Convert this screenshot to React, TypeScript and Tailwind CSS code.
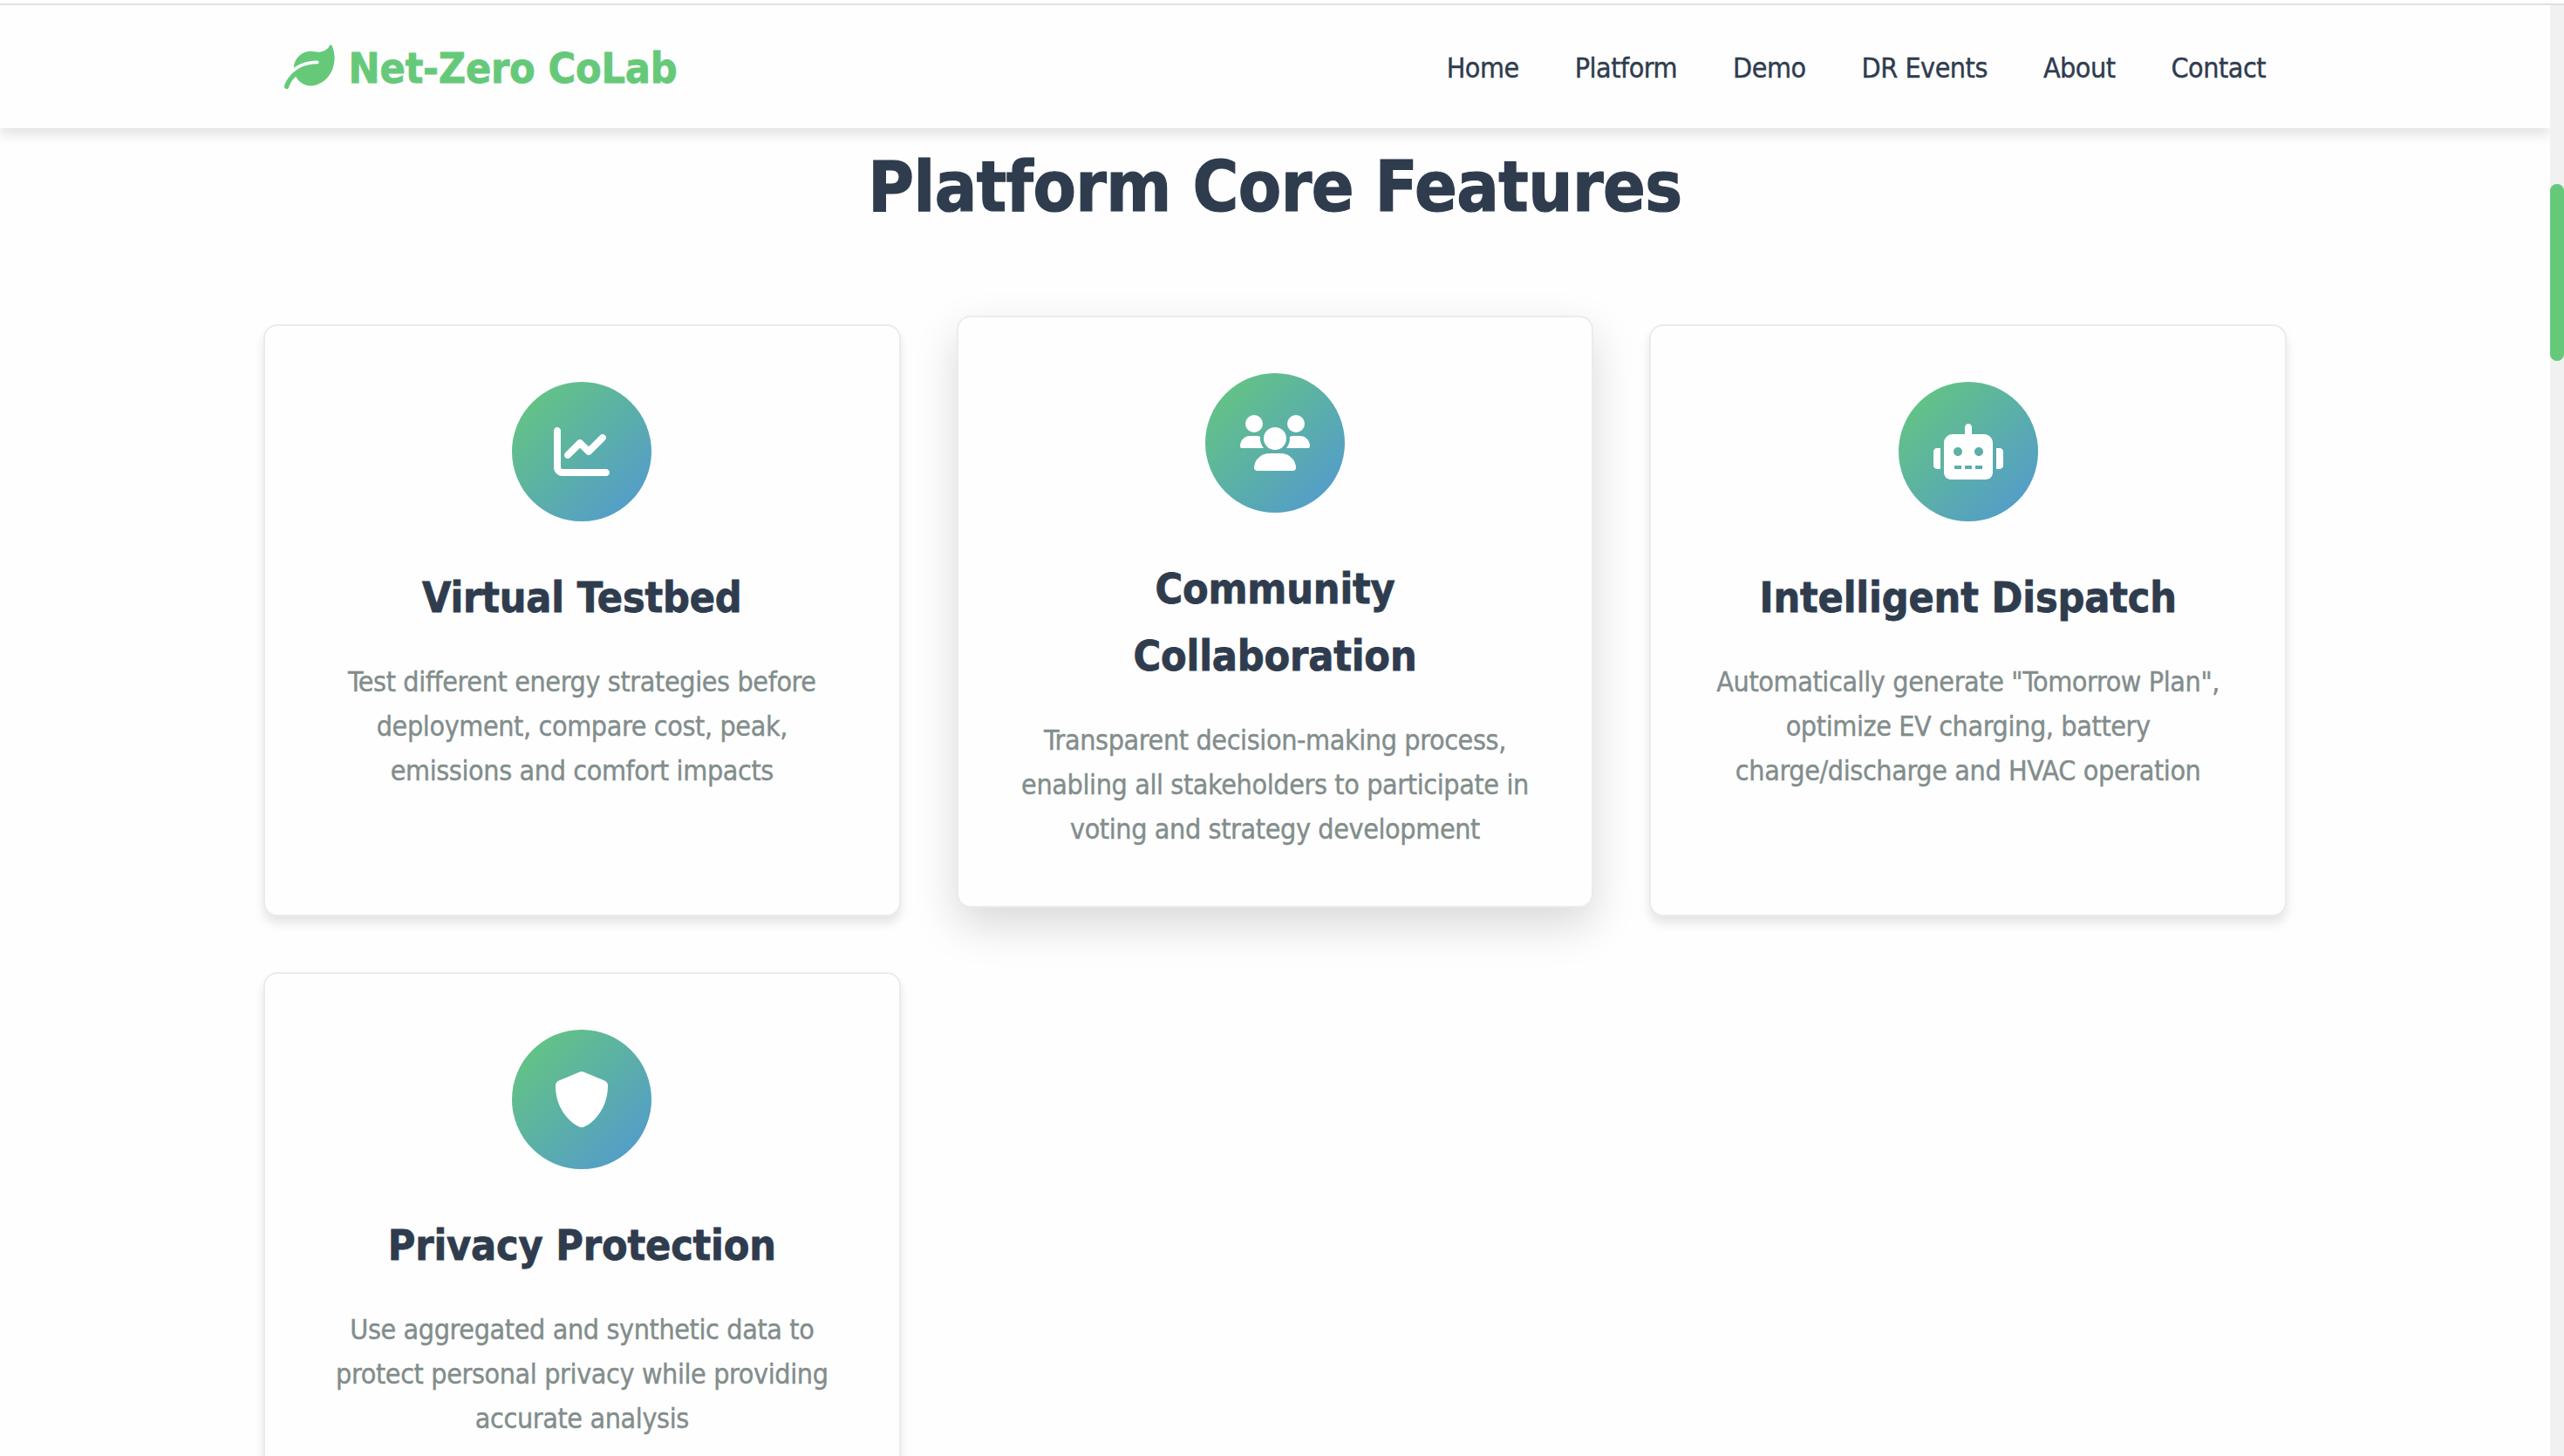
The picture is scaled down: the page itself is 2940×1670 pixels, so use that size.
import type { ReactNode } from "react";
import { FaChartLine } from "react-icons/fa6";
import clsx from "clsx";

const navItems = ["Home", "Platform", "Demo", "DR Events", "About", "Contact"];

type Feature = {
  icon: ReactNode;
  title: string;
  text: string;
  raised?: boolean;
};

function LeafIcon() {
  return (
    <svg viewBox="0 0 512 512" fill="currentColor" className="size-[57.6px]">
      <path d="M512 165.4c0 127.9-70.05 235.3-175.3 270.1c-20.04 7.938-41.83 12.46-64.69 12.46c-64.9 0-125.2-36.51-155.7-94.47c-54.13 49.93-68.71 107-68.96 108.1C44.72 472.6 34.87 480 24.02 480c-1.844 0-3.727-.2187-5.602-.6562c-12.89-3.098-20.84-16.08-17.75-28.96c9.598-39.5 90.47-226.4 335.3-226.4C344.8 224 352 216.8 352 208S344.8 192 336 192C228.6 192 151 226.6 96.29 267.6c.1934-10.82 1.242-21.84 3.535-33.05c13.47-65.81 66.04-119 131.4-134.2c28.33-6.562 55.68-6.013 80.93-.0054c56 13.32 118.2-7.412 149.3-61.24c5.664-9.828 20.02-9.516 24.66 .8282C502.7 76.76 512 121.9 512 165.4z" />
    </svg>
  );
}

function UsersIcon() {
  return (
    <svg viewBox="0 0 640 512" fill="currentColor" className="h-16 w-20">
      <circle cx="128" cy="80" r="80" />
      <circle cx="512" cy="80" r="80" />
      <circle cx="320" cy="216" r="104" />
      <path d="M369.9 352H270.1C191.6 352 128 411.7 128 485.3C128 500.1 140.7 512 156.4 512h327.2C499.3 512 512 500.1 512 485.3C512 411.7 448.4 352 369.9 352z" />
      <path d="M183.9 216c0-5.449 .9824-10.63 1.609-15.91C174.6 194.1 162.6 192 149.9 192H88.08C39.44 192 0 233.8 0 285.3C0 295.6 7.887 304 17.62 304h199.5C196.7 280.2 183.9 249.7 183.9 216z" />
      <path d="M551.9 192h-61.84c-12.8 0-24.88 3.037-35.86 8.24C454.8 205.5 455.8 210.6 455.8 216c0 33.71-12.78 64.21-33.16 88h199.7C632.1 304 640 295.6 640 285.3C640 233.8 600.6 192 551.9 192z" />
    </svg>
  );
}

function RobotIcon() {
  return (
    <svg viewBox="0 0 640 512" fill="currentColor" fillRule="evenodd" className="h-16 w-20">
      <path d="M9.375 233.4C3.375 239.4 0 247.5 0 256v128c0 8.5 3.375 16.62 9.375 22.62S23.5 416 32 416h32V224H32C23.5 224 15.38 227.4 9.375 233.4zM464 96H352V32c0-17.62-14.38-32-32-32S288 14.38 288 32v64H176C131.8 96 96 131.8 96 176V448c0 35.38 28.62 64 64 64h320c35.38 0 64-28.62 64-64V176C544 131.8 508.3 96 464 96zM256 416H192v-32h64V416zM224 296C201.9 296 184 278.1 184 256S201.9 216 224 216S264 233.9 264 256S246.1 296 224 296zM352 416H288v-32h64V416zM448 416h-64v-32h64V416zM416 296c-22.12 0-40-17.88-40-40S393.9 216 416 216S456 233.9 456 256S438.1 296 416 296zM630.6 233.4C624.6 227.4 616.5 224 608 224h-32v192h32c8.5 0 16.62-3.375 22.62-9.375S640 392.5 640 384V256C640 247.5 636.6 239.4 630.6 233.4z" />
    </svg>
  );
}

function ShieldIcon() {
  return (
    <svg viewBox="0 0 512 512" fill="currentColor" className="size-16">
      <path d="M496 128C496 381.3 309.1 512 256 512C204.9 512 16 385.3 16 128c0-19.41 11.7-36.89 29.61-44.28l192-80.01C242.5 1.67 250.6 0 256 0s13.58 1.67 18.49 3.7l192 80.01C484.3 91.1 496 108.6 496 128z" />
    </svg>
  );
}

const features: Feature[] = [
  {
    icon: <FaChartLine className="size-16" />,
    title: "Virtual Testbed",
    text: "Test different energy strategies before\ndeployment, compare cost, peak,\nemissions and comfort impacts",
  },
  {
    icon: <UsersIcon />,
    title: "Community\nCollaboration",
    text: "Transparent decision-making process,\nenabling all stakeholders to participate in\nvoting and strategy development",
    raised: true,
  },
  {
    icon: <RobotIcon />,
    title: "Intelligent Dispatch",
    text: "Automatically generate \"Tomorrow Plan\",\noptimize EV charging, battery\ncharge/discharge and HVAC operation",
  },
  {
    icon: <ShieldIcon />,
    title: "Privacy Protection",
    text: "Use aggregated and synthetic data to\nprotect personal privacy while providing\naccurate analysis",
  },
];

function Header() {
  return (
    <header className="relative z-10 h-[141px] shrink-0 bg-[#fefefe] shadow-[0_8px_12px_rgba(0,0,0,0.1)]">
      <div className="mx-auto flex h-full w-[2400px] items-center justify-between px-16">
        <div className="flex items-center gap-4 text-[#66c97a]">
          <LeafIcon />
          <span className="pt-[3px] text-[48px] leading-[76.8px] font-bold tracking-[-0.2px] whitespace-nowrap [-webkit-text-stroke:0.8px]">
            Net-Zero CoLab
          </span>
        </div>
        <nav className="flex gap-16 pt-1">
          {navItems.map((item) => (
            <a
              key={item}
              href="#"
              className="text-[32px] leading-[51.2px] tracking-[-0.5px] whitespace-nowrap [-webkit-text-stroke:0.4px]"
            >
              {item}
            </a>
          ))}
        </nav>
      </div>
    </header>
  );
}

function FeatureCard({ icon, title, text, raised }: Feature) {
  return (
    <article
      className={clsx(
        "rounded-[16px] border-2 border-[#ebebef] bg-[#fefefe] pt-16 pb-[62px] text-center",
        raised
          ? "-translate-y-[10px] shadow-[0_20px_50px_rgba(0,0,0,0.15)]"
          : "shadow-[0_8px_12px_rgba(0,0,0,0.1)]"
      )}
    >
      <div className="mx-auto mb-[49px] flex size-40 items-center justify-center rounded-full bg-[linear-gradient(135deg,#66c97a,#5197d4)] text-white">
        {icon}
      </div>
      <h3 className="mb-[33px] text-[48px] leading-[76.8px] font-bold tracking-[-0.15px] whitespace-pre [-webkit-text-stroke:0.8px]">
        {title}
      </h3>
      <p className="text-[32px] leading-[51.2px] tracking-[-0.39px] whitespace-pre text-[#828d8c] [-webkit-text-stroke:0.4px]">
        {text}
      </p>
    </article>
  );
}

export default function App() {
  return (
    <div className="flex h-[1670px] w-[2940px] flex-col overflow-hidden bg-[#fefefe] pt-1 font-['DejaVu_Sans_Condensed','DejaVu_Sans',sans-serif] text-[#2f3c4e]">
      <div className="h-0.5 shrink-0 bg-[#e0e0e0]" />
      <div className="flex min-h-0 flex-1">
        <div className="flex w-[2924px] flex-col overflow-hidden">
          <Header />
          <main className="mx-auto w-[2400px] px-10 pt-1">
            <h2 className="mb-[93px] text-center text-[80px] leading-[128px] font-bold tracking-[-0.5px] whitespace-nowrap [-webkit-text-stroke:1.2px]">
              Platform Core Features
            </h2>
            <div className="grid grid-cols-3 gap-16">
              {features.map((feature) => (
                <FeatureCard key={feature.title} {...feature} />
              ))}
            </div>
          </main>
        </div>
        {/* scroll track */}
        <div className="w-4 bg-[#f1f1f1] pt-[205px]">
          <div className="h-[203px] rounded-lg bg-[#66c97a]" />
        </div>
      </div>
    </div>
  );
}
